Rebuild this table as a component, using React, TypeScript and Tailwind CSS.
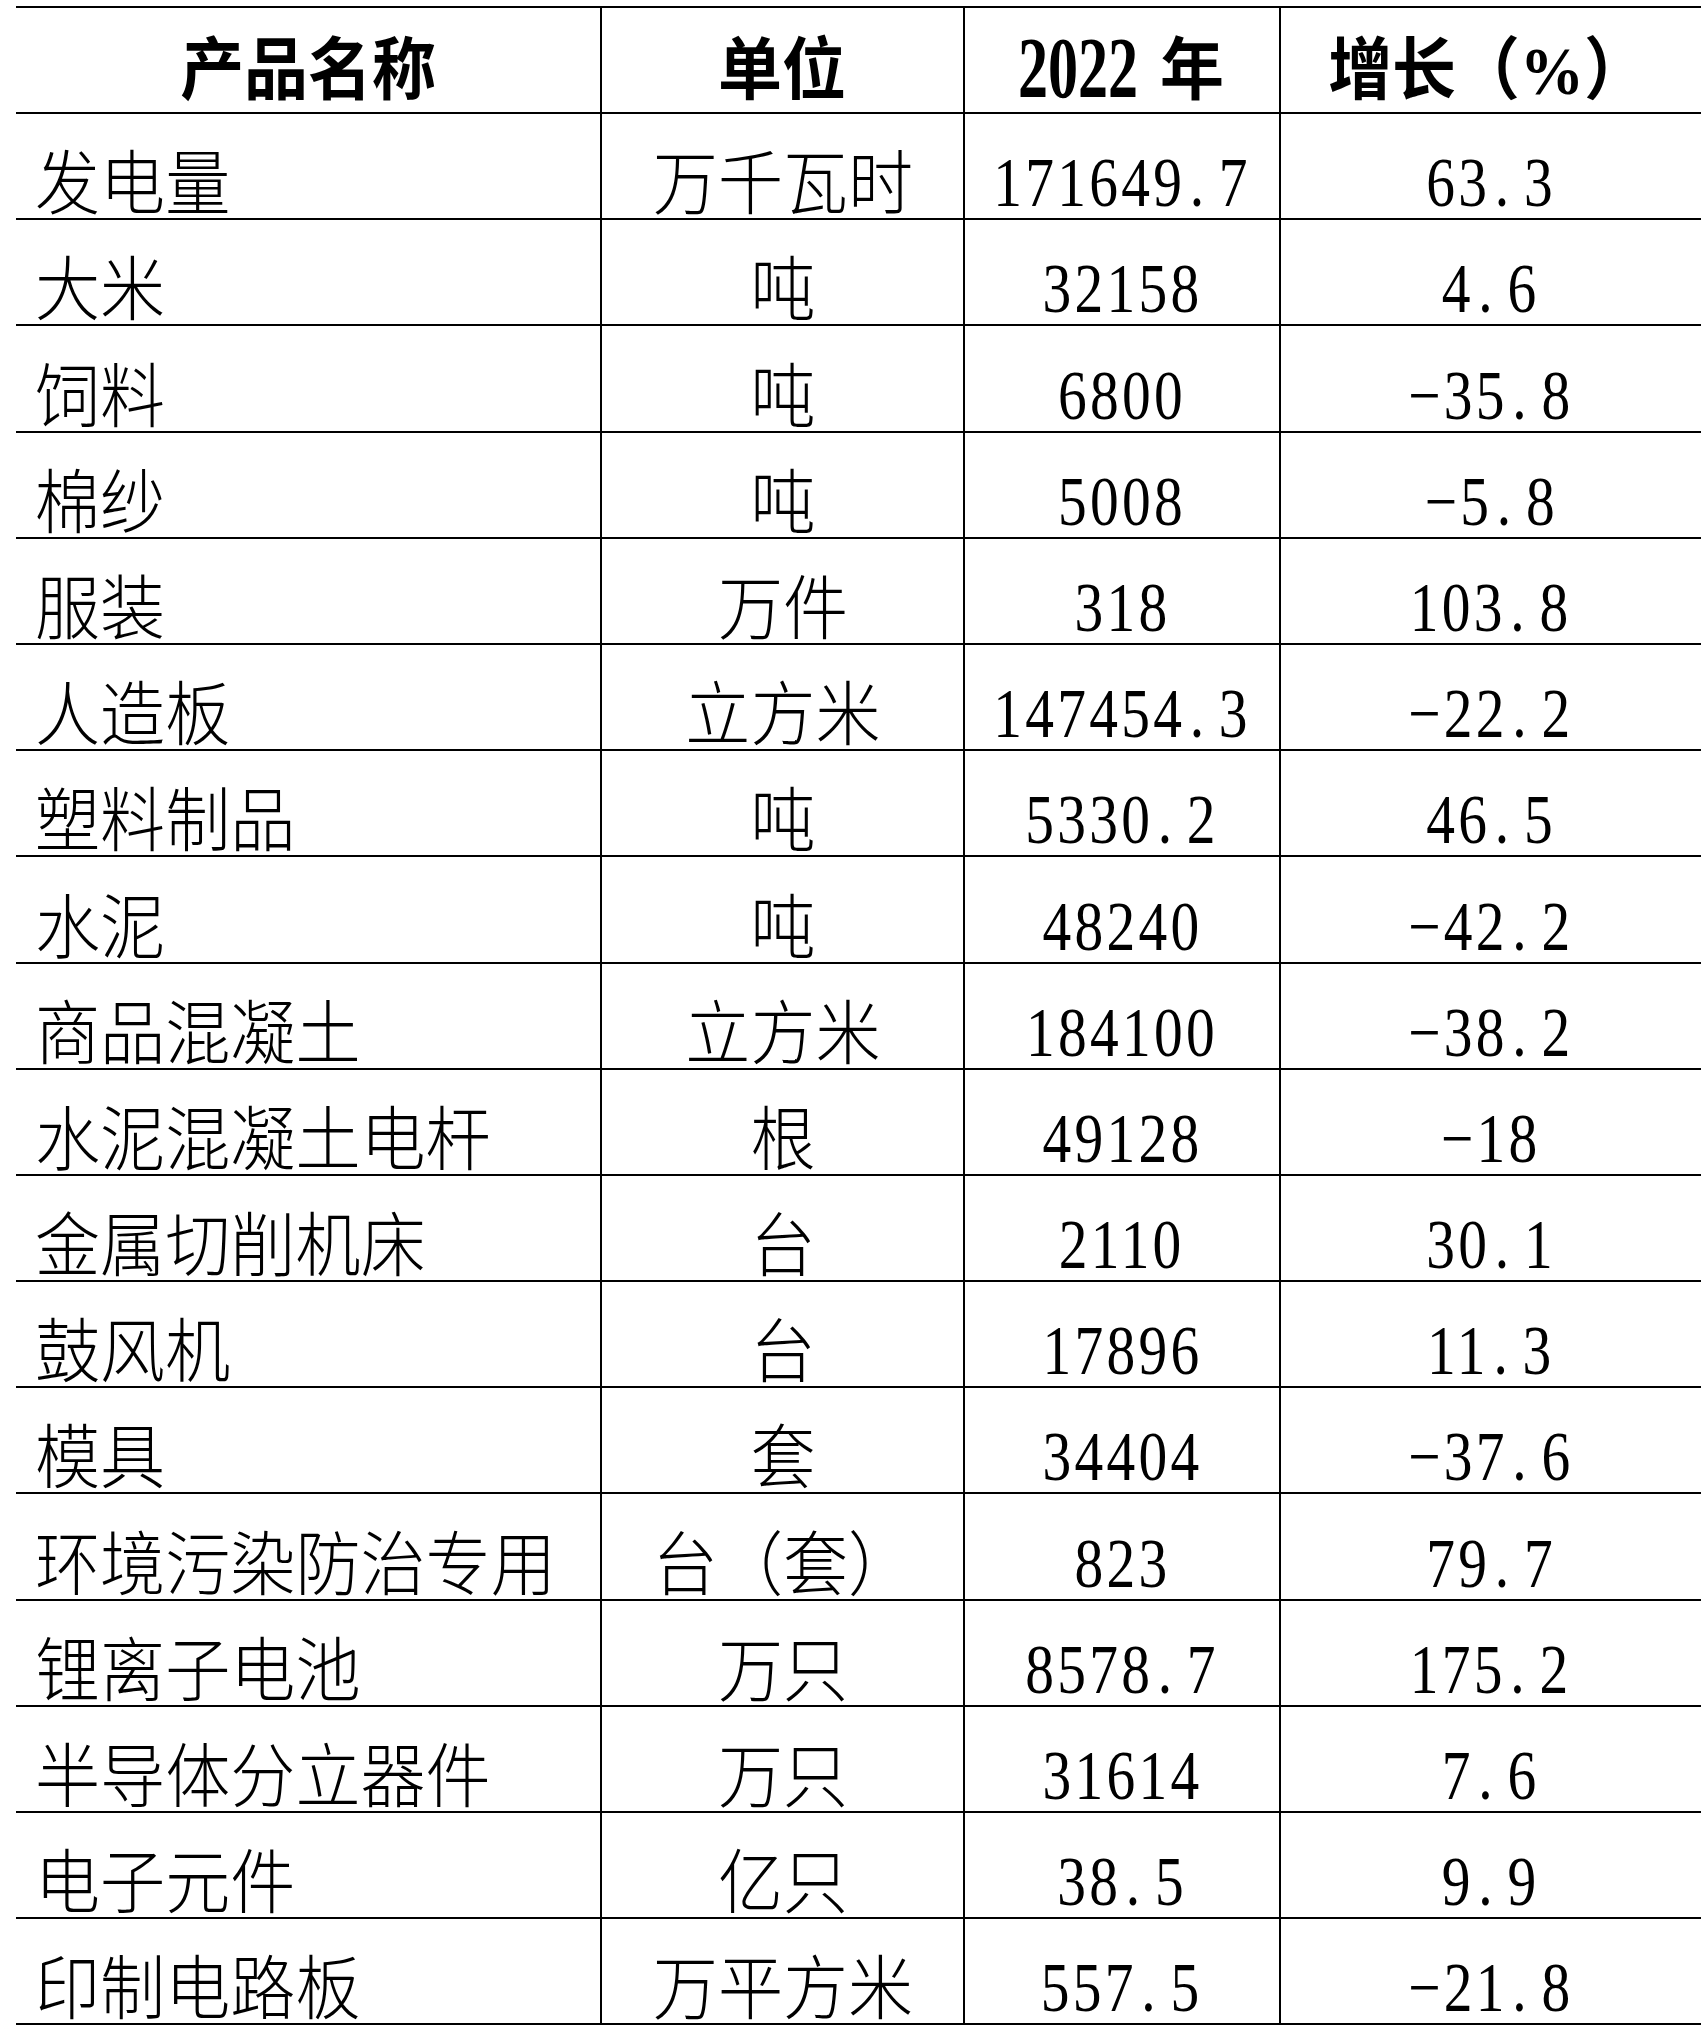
import React from "react";

const rows: [string, string, string, string][] = [
  ["发电量", "万千瓦时", "171649.7", "63.3"],
  ["大米", "吨", "32158", "4.6"],
  ["饲料", "吨", "6800", "-35.8"],
  ["棉纱", "吨", "5008", "-5.8"],
  ["服装", "万件", "318", "103.8"],
  ["人造板", "立方米", "147454.3", "-22.2"],
  ["塑料制品", "吨", "5330.2", "46.5"],
  ["水泥", "吨", "48240", "-42.2"],
  ["商品混凝土", "立方米", "184100", "-38.2"],
  ["水泥混凝土电杆", "根", "49128", "-18"],
  ["金属切削机床", "台", "2110", "30.1"],
  ["鼓风机", "台", "17896", "11.3"],
  ["模具", "套", "34404", "-37.6"],
  ["环境污染防治专用", "台（套）", "823", "79.7"],
  ["锂离子电池", "万只", "8578.7", "175.2"],
  ["半导体分立器件", "万只", "31614", "7.6"],
  ["电子元件", "亿只", "38.5", "9.9"],
  ["印制电路板", "万平方米", "557.5", "-21.8"],
];

function Num({ v }: { v: string }) {
  const neg = v.startsWith("-");
  const body = neg ? v.slice(1) : v;
  const [i, f] = body.split(".");
  return (
    <span className="inline-block font-['Liberation_Serif',serif] text-[70px] leading-none tracking-[4px] scale-x-[0.82] text-black whitespace-nowrap">
      {neg ? "−" : ""}
      {i}
      {f !== undefined && (
        <>
          <span className="ml-[0.08em] mr-[0.2em]">.</span>
          {f}
        </>
      )}
    </span>
  );
}

function Cjk({ t, left }: { t: string; left?: boolean }) {
  return (
    <span
      className={
        "inline-block font-['Noto_Sans_CJK_SC',sans-serif] font-light text-[70px] leading-none scale-x-[0.93] text-black whitespace-nowrap " +
        (left ? "origin-left" : "origin-center")
      }
    >
      {t}
    </span>
  );
}

function HeadCjk({ children }: { children: React.ReactNode }) {
  return (
    <span className="inline-block font-['Noto_Sans_CJK_SC',sans-serif] font-bold text-[68px] leading-none scale-x-[0.94] text-black whitespace-nowrap pb-[13px]">
      {children}
    </span>
  );
}

export default function App() {
  return (
    <div className="w-[1701px] h-[2029px] bg-white overflow-hidden">
      <div className="pt-[6px] pl-[16px]">
        <div className="border-t-2 border-black">
          {/* header */}
          <div className="grid grid-cols-[586px_363px_316px_1fr] h-[106px] border-b-2 border-black">
            <div className="flex items-end justify-center border-r-2 border-black">
              <HeadCjk>产品名称</HeadCjk>
            </div>
            <div className="flex items-end justify-center border-r-2 border-black">
              <HeadCjk>单位</HeadCjk>
            </div>
            <div className="flex items-end justify-center gap-[20px] border-r-2 border-black">
              <span className="inline-block w-[120px] pb-[1px]">
                <span className="inline-block font-['Liberation_Serif',serif] font-bold text-[87px] leading-none scale-x-[0.69] origin-left text-black">
                  2022
                </span>
              </span>
              <HeadCjk>年</HeadCjk>
            </div>
            <div className="flex items-end justify-center pr-[6px]">
              <HeadCjk>
                增长（
                <span className="font-['Liberation_Serif',serif] leading-[0]">%</span>）
              </HeadCjk>
            </div>
          </div>
          {rows.map((r, idx) => (
            <div
              key={idx}
              className="grid grid-cols-[586px_363px_316px_1fr] h-[106.2px] border-b-2 border-black"
            >
              <div className="flex items-end pl-[19px] pb-[4px] border-r-2 border-black">
                <Cjk t={r[0]} left />
              </div>
              <div className="flex items-end justify-center pb-[4px] border-r-2 border-black">
                <Cjk t={r[1]} />
              </div>
              <div className="flex items-end justify-center border-r-2 border-black">
                <Num v={r[2]} />
              </div>
              <div className="flex items-end justify-center">
                <Num v={r[3]} />
              </div>
            </div>
          ))}
        </div>
      </div>
    </div>
  );
}
